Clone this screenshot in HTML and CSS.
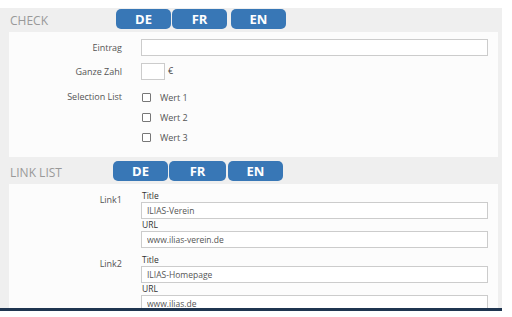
FILE: index.html
```html
<!DOCTYPE html>
<html lang="de">
<head>
    <meta charset="UTF-8">
    <meta name="viewport" content="width=device-width, initial-scale=1.0">
    <title>Check / Link List</title>
    <link rel="stylesheet" href="styles.css">
</head>
<body>
    <div class="page">
        <div class="section-head">
            <h2 class="section-title">Check</h2>
            <div class="langs">
                <button class="lang">DE</button>
                <button class="lang">FR</button>
                <button class="lang lang-sep">EN</button>
            </div>
        </div>

        <div class="panel panel-check">
            <div class="row">
                <label class="row-label">Eintrag</label>
                <div class="row-field"><input type="text" class="text-input"></div>
            </div>
            <div class="row">
                <label class="row-label">Ganze Zahl</label>
                <div class="row-field inline">
                    <input type="text" class="text-input small">
                    <span class="unit">€</span>
                </div>
            </div>
            <div class="row">
                <label class="row-label list-label">Selection List</label>
                <div class="row-field">
                    <div class="option"><span class="checkbox"></span>Wert 1</div>
                    <div class="option"><span class="checkbox"></span>Wert 2</div>
                    <div class="option"><span class="checkbox"></span>Wert 3</div>
                </div>
            </div>
        </div>

        <div class="section-head second">
            <h2 class="section-title">Link List</h2>
            <div class="langs">
                <button class="lang">DE</button>
                <button class="lang wide">FR</button>
                <button class="lang">EN</button>
            </div>
        </div>

        <div class="panel panel-links">
            <div class="row link-row">
                <label class="row-label link-label">Link1</label>
                <div class="row-field">
                    <div class="sub-label">Title</div>
                    <input type="text" class="text-input" value="ILIAS-Verein">
                    <div class="sub-label">URL</div>
                    <input type="text" class="text-input" value="www.ilias-verein.de">
                </div>
            </div>
            <div class="row link-row">
                <label class="row-label link-label">Link2</label>
                <div class="row-field">
                    <div class="sub-label">Title</div>
                    <input type="text" class="text-input" value="ILIAS-Homepage">
                    <div class="sub-label">URL</div>
                    <input type="text" class="text-input" value="www.ilias.de">
                </div>
            </div>
        </div>
    </div>
    <div class="statusbar"></div>
</body>
</html>
```

FILE: styles.css
```css
body {
    margin: 0;
    padding-top: 8px;
    background-color: white;
    font-family: "Open Sans", "DejaVu Sans", sans-serif;
    color: #555;
}
.page {
    width: 502px;
    height: 300px;
    overflow: hidden;
    background-color: #efefef;
}
.section-head {
    display: flex;
    align-items: flex-end;
    height: 24px;
    box-sizing: border-box;
    padding-bottom: 3px;
}
.section-head.second {
    height: 27px;
}
.section-title {
    width: 116px;
    box-sizing: border-box;
    margin: 0;
    padding-left: 10px;
    padding-bottom: 1px;
    font-size: 12px;
    font-weight: normal;
    line-height: 14px;
    text-transform: uppercase;
    color: #999;
}
.second .section-title {
    width: 113px;
}
.langs {
    display: flex;
    gap: 1px;
}
.lang {
    width: 55px;
    height: 20px;
    padding: 0;
    border: none;
    border-radius: 5px;
    background-color: #3877b6;
    color: white;
    font-family: inherit;
    font-size: 13px;
    font-weight: bold;
    line-height: 20px;
}
.lang-sep {
    margin-left: 3px;
}
.lang.wide {
    width: 57px;
    margin-right: 1px;
}
.panel {
    margin-left: 9px;
    width: 489px;
    box-sizing: border-box;
    padding-right: 10px;
    background-color: #fcfcfc;
}
.panel-check {
    padding-top: 7px;
    padding-bottom: 10px;
}
.panel-links {
    padding-top: 6px;
}
.row {
    display: grid;
    grid-template-columns: 113px 1fr;
    column-gap: 19px;
    margin-bottom: 7px;
}
.row:last-child {
    margin-bottom: 0;
}
.row-label {
    text-align: right;
    font-size: 9px;
    line-height: 17px;
    color: #555;
}
.list-label {
    line-height: 20px;
}
.link-label {
    padding-top: 4px;
    line-height: 12px;
}
.link-row {
    margin-bottom: 6px;
}
.row-field.inline {
    display: flex;
    align-items: center;
    gap: 3px;
}
.text-input {
    display: block;
    width: 100%;
    height: 17px;
    box-sizing: border-box;
    margin: 0;
    padding: 0 5px;
    border: 1px solid #ccc;
    background-color: white;
    font-family: inherit;
    font-size: 8.5px;
    color: #555;
}
.text-input.small {
    width: 24px;
}
.unit {
    font-size: 9px;
    color: #444;
    margin-top: -2px;
}
.option {
    display: flex;
    align-items: center;
    height: 20px;
    font-size: 9px;
    color: #555;
}
.checkbox {
    width: 7px;
    height: 7px;
    margin-left: 1px;
    margin-right: 9px;
    border: 1px solid #777;
    border-radius: 1px;
    background-color: white;
}
.sub-label {
    padding-left: 1px;
    font-size: 8.5px;
    line-height: 12px;
    color: #333;
}
.statusbar {
    width: 502px;
    height: 3px;
    background-color: #1f3550;
}
```
